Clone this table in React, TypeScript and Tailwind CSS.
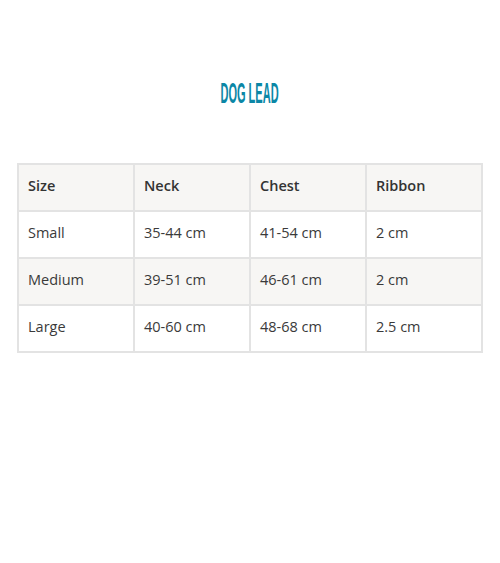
const rows = [
  ['Small', '35-44 cm', '41-54 cm', '2 cm'],
  ['Medium', '39-51 cm', '46-61 cm', '2 cm'],
  ['Large', '40-60 cm', '48-68 cm', '2.5 cm'],
]

const headers = ['Size', 'Neck', 'Chest', 'Ribbon']

export default function App() {
  return (
    <div className="w-[500px] h-[563px] bg-white pt-[80px] px-[17px]" style={{ fontFamily: '"Open Sans", "Noto Sans", sans-serif' }}>
      {/* Title */}
      <div className="flex justify-center h-[24px] items-center">
        <h1
          className="inline-block text-[29px] font-bold leading-none text-[#0b87a6] scale-x-[0.38] scale-y-[1.02] translate-y-[1px] whitespace-nowrap"
          style={{ fontFamily: '"Liberation Sans", Arial, sans-serif' }}
        >
          DOG LEAD
        </h1>
      </div>

      <table className="w-[466px] mt-[59px] border-collapse table-fixed text-[14.5px] text-[#3a3a3a]">
        <thead>
          <tr className="bg-[#f7f6f4]">
            {headers.map(h => (
              <th key={h} className="border-2 border-[#e3e3e3] h-[47px] pl-[9px] pb-[3px] text-left font-semibold text-[#333]">
                {h}
              </th>
            ))}
          </tr>
        </thead>
        <tbody>
          {rows.map((r, i) => (
            <tr key={r[0]} className={i === 1 ? 'bg-[#f7f6f4]' : 'bg-white'}>
              {r.map((c, j) => (
                <td key={j} className="border-2 border-[#e3e3e3] h-[47px] pl-[9px] pb-[3px]">
                  {c}
                </td>
              ))}
            </tr>
          ))}
        </tbody>
      </table>
    </div>
  )
}
